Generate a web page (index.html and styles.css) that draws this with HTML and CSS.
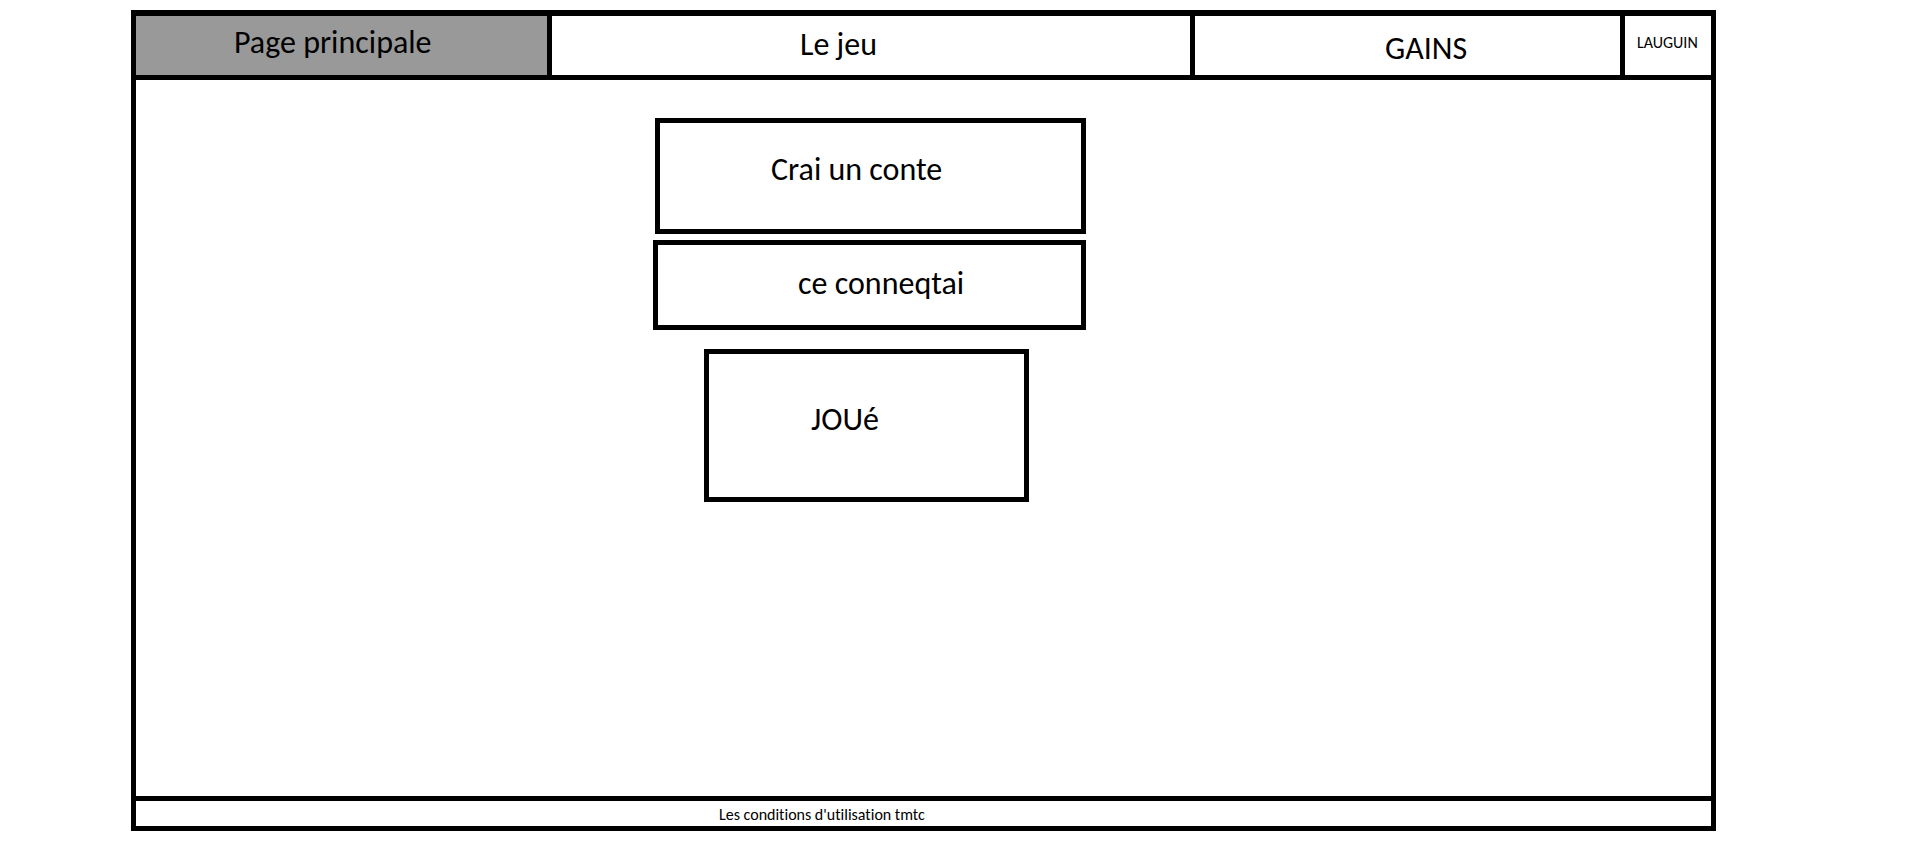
FILE: index.html
```html
<!DOCTYPE html>
<html lang="fr">
<head>
<meta charset="utf-8">
<title>Page principale</title>
<link rel="stylesheet" href="styles.css">
</head>
<body>
<div class="frame">
  <nav class="nav">
    <a class="tab tab-home" href="#" aria-current="page">Page principale</a>
    <a class="tab tab-game" href="#">Le jeu</a>
    <a class="tab tab-gains" href="#">GAINS</a>
    <a class="tab tab-login" href="#">LAUGUIN</a>
  </nav>
  <main class="main">
    <div class="actions">
      <button class="action action-create" type="button">Crai un conte</button>
      <button class="action action-connect" type="button">ce conneqtai</button>
      <button class="action action-play" type="button">JOUé</button>
    </div>
  </main>
  <footer class="footer"><a class="terms" href="#">Les conditions d'utilisation tmtc</a></footer>
</div>
</body>
</html>
```
FILE: styles.css
```css
* {
  box-sizing: border-box;
}

body {
  margin: 0;
  min-height: 100vh;
  display: flex;
  flex-direction: column;
  background: #fff;
  color: #000;
  font-family: Carlito, "Open Sans", "Noto Sans", sans-serif;
  font-size: 32px;
  line-height: 32px;
  font-variant-ligatures: none;
}

a {
  color: inherit;
  text-decoration: none;
}

.frame {
  flex: 1;
  display: flex;
  flex-direction: column;
  margin: 10px 196px 37px 131px;
  border: 5px solid #000;
  border-top-width: 6px;
}

.nav {
  display: grid;
  grid-template-columns: 416fr 643fr 430fr 86px;
  border-bottom: 5px solid #000;
}

.tab {
  height: 59px;
  border-right: 5px solid #000;
}

.tab-home {
  padding: 11px 0 0 98px;
  background: #999;
}

.tab-game {
  padding: 13px 0 0 248px;
}

.tab-gains {
  padding: 17px 0 0 190px;
}

.tab-login {
  padding: 11px 0 0 12px;
  border-right: 0;
  font-size: 16px;
}

.main {
  flex: 1;
  display: grid;
  grid-template-columns: 517fr 433fr 625fr;
  padding-top: 38px;
}

.actions {
  grid-column: 2;
  display: flex;
  flex-direction: column;
}

.action {
  border: 5px solid #000;
  background: #fff;
  color: inherit;
  font: inherit;
  font-variant-ligatures: none;
  text-align: left;
}

.action-create {
  margin-left: 2px;
  padding: 31px 0 43px 111px;
}

.action-connect {
  margin-top: 6px;
  padding: 23px 0 25px 140px;
}

.action-play {
  margin: 19px 57px 0 51px;
  padding: 50px 0 61px 102px;
}

.footer {
  padding: 2px 0 0 583px;
  border-top: 5px solid #000;
  font-size: 16px;
  line-height: 23px;
}
```
